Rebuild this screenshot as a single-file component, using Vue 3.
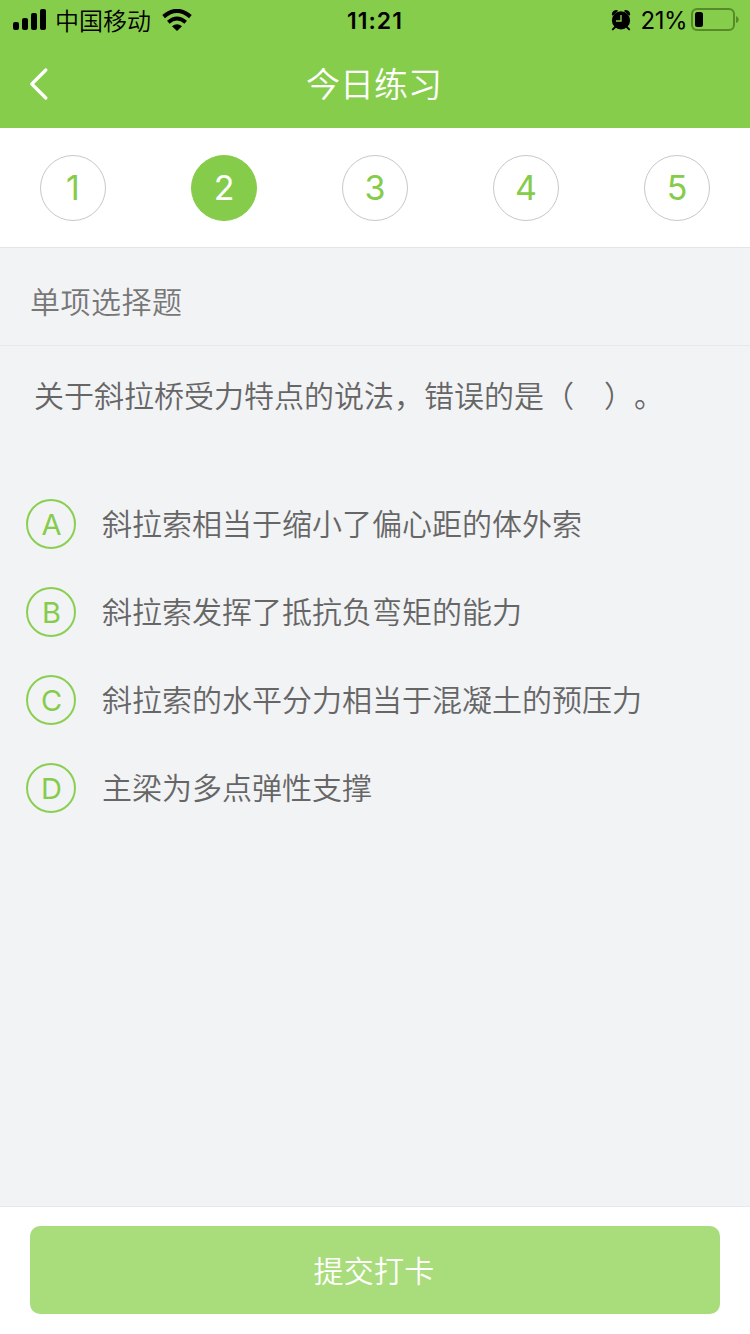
<script setup>
import { ref } from 'vue'

const steps = [1, 2, 3, 4, 5]
const current = ref(2)
const options = [
  { key: 'A', text: '斜拉索相当于缩小了偏心距的体外索' },
  { key: 'B', text: '斜拉索发挥了抵抗负弯矩的能力' },
  { key: 'C', text: '斜拉索的水平分力相当于混凝土的预压力' },
  { key: 'D', text: '主梁为多点弹性支撑' },
]
</script>

<template>
  <div class="page">
    <header class="top">
      <div class="status">
        <div class="status-left">
          <svg class="signal" width="34" height="22" viewBox="0 0 34 22">
            <rect x="0" y="13" width="6" height="8" rx="2" />
            <rect x="9" y="9" width="6" height="12" rx="2" />
            <rect x="18" y="4" width="6" height="17" rx="2" />
            <rect x="27" y="0" width="6" height="21" rx="2" />
          </svg>
          <span class="carrier">中国移动</span>
          <svg class="wifi" width="30" height="22" viewBox="0 0 30 22">
            <path d="M1.6 7.6 Q15 -3.8 28.4 7.6" fill="none" stroke="#000" stroke-width="4.1" />
            <path d="M6.3 13.2 Q15 5.8 23.7 13.2" fill="none" stroke="#000" stroke-width="3.9" />
            <path d="M10 17.2 Q15 13.2 20 17.2 L15 22 Z" />
          </svg>
        </div>
        <span class="time">11:21</span>
        <div class="status-right">
          <svg class="alarm" width="20" height="22" viewBox="0 0 20 22">
            <path d="M0.8 5.8 Q0.8 1.2 6 1 L7 2 L1.8 6.8 Z M19.2 5.8 Q19.2 1.2 14 1 L13 2 L18.2 6.8 Z" />
            <circle cx="10" cy="11.4" r="9.1" />
            <path d="M4.2 18 L1.8 20.4 M15.8 18 L18.2 20.4" stroke="#000" stroke-width="2" stroke-linecap="round" />
            <path d="M10 6 V12 H5" fill="none" stroke="#87cd4c" stroke-width="1.4" />
          </svg>
          <span class="percent">21%</span>
          <svg class="battery" width="48" height="24" viewBox="0 0 48 24">
            <rect x="1" y="1" width="42" height="21" rx="5" fill="none" stroke="#578b2a" stroke-width="2" />
            <rect x="4" y="4" width="8" height="15" rx="2.5" />
            <path d="M45 8 Q47.8 9 47.8 11.5 Q47.8 14 45 15 Z" fill="#578b2a" />
          </svg>
        </div>
      </div>
      <nav class="nav">
        <svg class="back" width="20" height="32" viewBox="0 0 20 32">
          <path d="M16.8 2 L2.8 16 L16.8 30" fill="none" stroke="#fff" stroke-width="3.2" stroke-linecap="round" stroke-linejoin="round" />
        </svg>
        <h1>今日练习</h1>
      </nav>
    </header>

    <div class="steps">
      <button v-for="n in steps" :key="n" class="step" :class="{ active: n === current }" @click="current = n">{{ n }}</button>
    </div>

    <div class="category">单项选择题</div>

    <main class="body">
      <p class="question">关于斜拉桥受力特点的说法，错误的是（&#12288;）。</p>
      <ul class="options">
        <li v-for="o in options" :key="o.key">
          <span class="letter">{{ o.key }}</span>
          <span class="label">{{ o.text }}</span>
        </li>
      </ul>
    </main>

    <footer class="footer">
      <button class="submit">提交打卡</button>
    </footer>
  </div>
</template>

<style>
body {
  margin: 0;
}
</style>

<style scoped>
.page {
  width: 750px;
  height: 1334px;
  display: flex;
  flex-direction: column;
  background: #f2f3f5;
  color: #666;
  font-family: Inter, "Noto Sans CJK SC", sans-serif;
  font-weight: 350;
  text-spacing-trim: space-all;
  overflow: hidden;
}
button {
  font-family: inherit;
  font-weight: inherit;
  margin: 0;
  padding: 0;
}
.top {
  height: 128px;
  background: #87cd4c;
}
.status {
  height: 40px;
  display: grid;
  grid-template-columns: 1fr auto 1fr;
  grid-template-rows: 40px;
  align-items: center;
  color: #000;
}
.status-left,
.status-right {
  display: flex;
  align-items: center;
}
.status-left {
  padding-left: 13px;
}
.status-right {
  justify-content: flex-end;
  padding-right: 11px;
}
.carrier {
  margin-left: 8px;
  font-size: 24px;
  line-height: 40px;
  font-family: "Noto Sans CJK SC", sans-serif;
}
.wifi {
  margin-left: 11px;
}
.time {
  padding-top: 2px;
  font-size: 23px;
  font-weight: 600;
  line-height: 38px;
  letter-spacing: 1px;
}
.percent {
  margin-left: 10px;
  padding-top: 2px;
  font-size: 24px;
  font-weight: 380;
  line-height: 38px;
  letter-spacing: -0.5px;
}
.battery {
  margin-left: 4px;
}
.nav {
  height: 88px;
  display: grid;
  grid-template-columns: 60px 1fr 60px;
  grid-template-rows: 88px;
  align-items: center;
}
.back {
  margin-left: 29px;
}
h1 {
  margin: 0 2px 0 0;
  padding-top: 2px;
  text-align: center;
  color: #fff;
  font-size: 34px;
  font-weight: 350;
  line-height: 86px;
}
.steps {
  height: 119px;
  padding: 0 40px;
  display: flex;
  align-items: center;
  justify-content: space-between;
  background: #fff;
  border-bottom: 1px solid #e5e5e5;
}
.step {
  width: 66px;
  height: 66px;
  box-sizing: border-box;
  border: 1px solid #c8c8c8;
  border-radius: 50%;
  background: #fff;
  color: #85cc4a;
  font-size: 34px;
  font-weight: 380;
  line-height: 64px;
}
.step.active {
  border-color: #85cc4a;
  background: #85cc4a;
  color: #fff;
}
.category {
  height: 97px;
  padding: 0 30px;
  border-bottom: 1px solid #e6e8eb;
  color: #777;
  font-size: 30px;
  line-height: 109px;
  letter-spacing: 0.5px;
}
.body {
  flex: 1;
}
.question {
  margin: 28px 34px 0;
  font-size: 30px;
  line-height: 44px;
}
.options {
  list-style: none;
  margin: 62px 0 0;
  padding: 0 26px;
}
.options li {
  height: 88px;
  display: flex;
  align-items: center;
  gap: 26px;
}
.letter {
  width: 50px;
  height: 50px;
  box-sizing: border-box;
  border: 2px solid #8bcf52;
  border-radius: 50%;
  color: #85cc4a;
  font-size: 29px;
  font-weight: 380;
  line-height: 48px;
  text-indent: 1px;
  text-align: center;
}
.label {
  font-size: 30px;
  line-height: 44px;
}
.footer {
  height: 108px;
  padding: 19px 30px 0;
  border-top: 1px solid #e6e8eb;
  background: #fff;
}
.submit {
  width: 100%;
  height: 88px;
  padding-right: 2px;
  border: 0;
  border-radius: 10px;
  background: #a9dc7a;
  color: #fff;
  font-size: 30px;
  line-height: 90px;
  letter-spacing: 0.3px;
}
</style>
